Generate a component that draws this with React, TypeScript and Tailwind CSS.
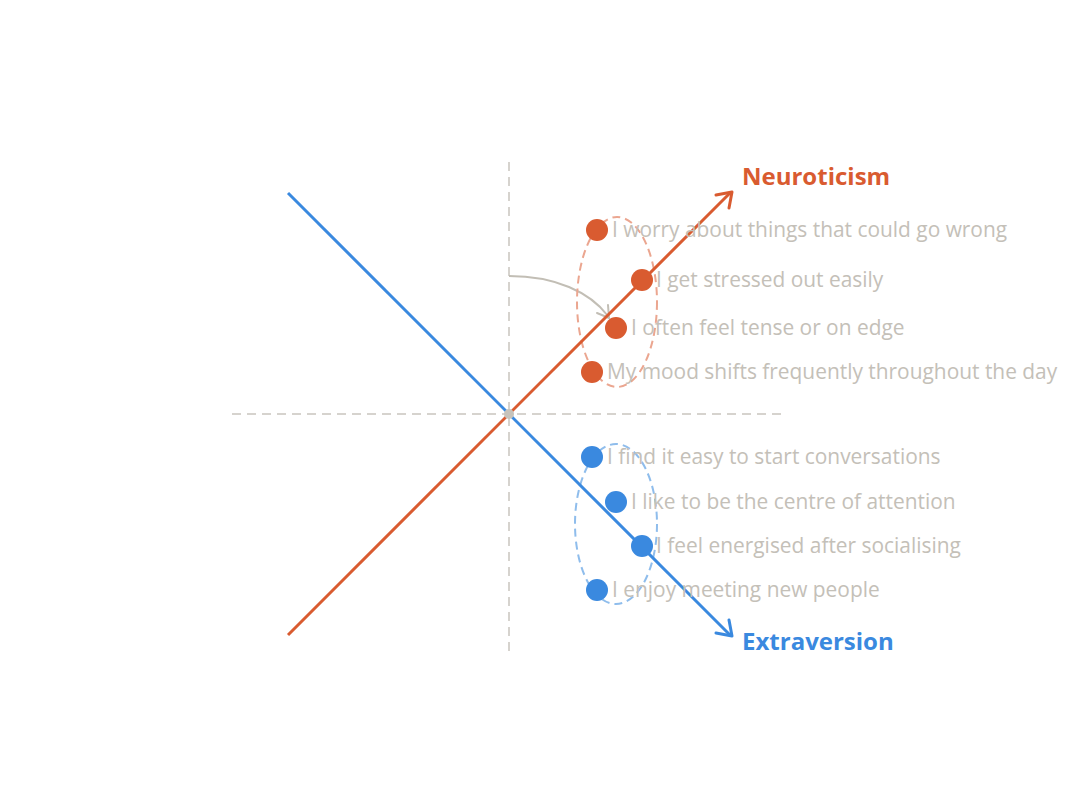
export default function App() {
  const orange = '#d95b30';
  const blue = '#3a89df';
  const label = '#c4c0b8';

  const neuro = [
    { cx: 597, cy: 230, tx: 612, text: 'I worry about things that could go wrong' },
    { cx: 642, cy: 280, tx: 656, text: 'I get stressed out easily' },
    { cx: 616, cy: 328, tx: 631, text: 'I often feel tense or on edge' },
    { cx: 592, cy: 372, tx: 607, text: 'My mood shifts frequently throughout the day' },
  ];
  const extra = [
    { cx: 592, cy: 457, tx: 607, text: 'I find it easy to start conversations' },
    { cx: 616, cy: 502, tx: 631, text: 'I like to be the centre of attention' },
    { cx: 642, cy: 546, tx: 656, text: 'I feel energised after socialising' },
    { cx: 597, cy: 590, tx: 612, text: 'I enjoy meeting new people' },
  ];

  return (
    <div className="w-[1092px] h-[794px] bg-white flex font-['Open_Sans','Noto_Sans',sans-serif]">
      <svg width="1092" height="794" viewBox="0 0 1092 794">
        {/* guide axes */}
        <line x1="509" y1="162" x2="509" y2="656" stroke="#d6d3ce" strokeWidth="2" strokeDasharray="9 6" />
        <line x1="232" y1="414" x2="786" y2="414" stroke="#d6d3ce" strokeWidth="2" strokeDasharray="9 6" />

        {/* rotation arc */}
        <path d="M509 276 C 555 276, 590 292, 608 316" fill="none" stroke="#c2beb5" strokeWidth="2" />
        <path d="M597 313 L609 318 L608 305" fill="none" stroke="#c2beb5" strokeWidth="2" strokeLinecap="round" strokeLinejoin="round" />

        {/* clusters */}
        <ellipse cx="617" cy="302" rx="40" ry="85" fill="none" stroke="#eba690" strokeWidth="2" strokeDasharray="8 5" />
        <ellipse cx="616" cy="524" rx="41" ry="80" fill="none" stroke="#8fbdec" strokeWidth="2" strokeDasharray="8 5" />

        {/* neuroticism axis */}
        <line x1="288" y1="635" x2="731" y2="192" stroke={orange} strokeWidth="3" />
        <path d="M716 195 L732 192 L729 208" fill="none" stroke={orange} strokeWidth="3" strokeLinecap="round" strokeLinejoin="round" />

        {/* extraversion axis */}
        <line x1="288" y1="193" x2="731" y2="636" stroke={blue} strokeWidth="3" />
        <path d="M729 620 L732 636 L716 633" fill="none" stroke={blue} strokeWidth="3" strokeLinecap="round" strokeLinejoin="round" />

        <circle cx="509" cy="414" r="5" fill="#c7c3bb" />

        {neuro.map((d) => (
          <g key={d.text}>
            <circle cx={d.cx} cy={d.cy} r="11" fill={orange} />
            <text x={d.tx} y={d.cy + 7} fontSize="20.9" fill={label}>{d.text}</text>
          </g>
        ))}
        {extra.map((d) => (
          <g key={d.text}>
            <circle cx={d.cx} cy={d.cy} r="11" fill={blue} />
            <text x={d.tx} y={d.cy + 7} fontSize="20.9" fill={label}>{d.text}</text>
          </g>
        ))}

        <text x="742" y="185" fontSize="24" fontWeight="700" fill={orange}>Neuroticism</text>
        <text x="742" y="650" fontSize="24" fontWeight="700" fill={blue}>Extraversion</text>
      </svg>
    </div>
  );
}
